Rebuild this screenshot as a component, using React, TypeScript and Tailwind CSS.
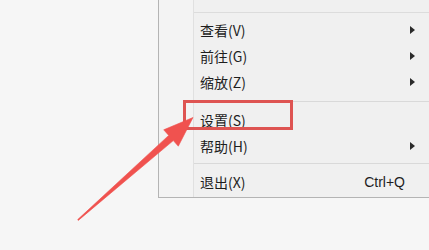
const cjk = { fontFamily: '"Microsoft YaHei", "Noto Sans CJK SC", "Liberation Sans", sans-serif' };

type Item = { label: string; sub?: boolean; shortcut?: string };

function Row({ label, sub, shortcut }: Item) {
  return (
    <div className="h-[26px] flex items-center pl-[6px] pr-[14px] text-[14px] text-[#1e1e1e]">
      <span className="flex-1 leading-none">{label}</span>
      {sub && (
        <svg width="5" height="8" viewBox="0 0 5 8" className="mr-0">
          <path d="M0 0 L5 4 L0 8 Z" fill="#2a2a2a" />
        </svg>
      )}
      {shortcut && <span className="mr-[10px] leading-none" style={{ fontFamily: '"Liberation Sans", sans-serif' }}>{shortcut}</span>}
    </div>
  );
}

function Sep({ h, top }: { h: string; top: string }) {
  return (
    <div className={`${h} flex flex-col`}>
      <div className={top} />
      <div className="h-px bg-[#d9d9d9]" />
    </div>
  );
}

export default function App() {
  return (
    <div className="relative w-[429px] h-[250px] overflow-hidden bg-[#f6f6f6] flex pl-[158px]" style={cjk}>
      <div className="w-[275px] h-[198px] flex bg-[#f0f0f0] border-l border-b border-[#b4b4b4]">
        <div className="w-[35px] border-r border-[#e0e0e0] bg-[#f3f3f3]" />
        <div className="flex-1 flex flex-col">
          <div className="h-[13px] flex flex-col justify-end">
            <div className="h-px bg-[#dcdcdc]" />
          </div>
          <div className="h-[4px]" />
          <Row label="查看(V)" sub />
          <Row label="前往(G)" sub />
          <Row label="缩放(Z)" sub />
          <Sep h="h-[12px]" top="h-[6px]" />
          <Row label="设置(S)" />
          <Row label="帮助(H)" sub />
          <Sep h="h-[10px]" top="h-[4px]" />
          <Row label="退出(X)" shortcut="Ctrl+Q" />
        </div>
      </div>

      {/* annotation: highlight box */}
      <div className="absolute left-[183px] top-[100px] w-[110px] h-[30px] border-[3px] border-[#de5452]" />

      {/* annotation: arrow */}
      <svg className="absolute inset-0 pointer-events-none" width="429" height="250" viewBox="0 0 429 250">
        <polygon
          points="77.7,219.6 168.7,135.4 163.7,129.8 193,117.5 178.3,146.2 173.3,140.6 78.3,220.4"
          fill="#f0524f"
          stroke="#f0524f"
          strokeWidth="0.6"
          strokeLinejoin="round"
        />
      </svg>
    </div>
  );
}
